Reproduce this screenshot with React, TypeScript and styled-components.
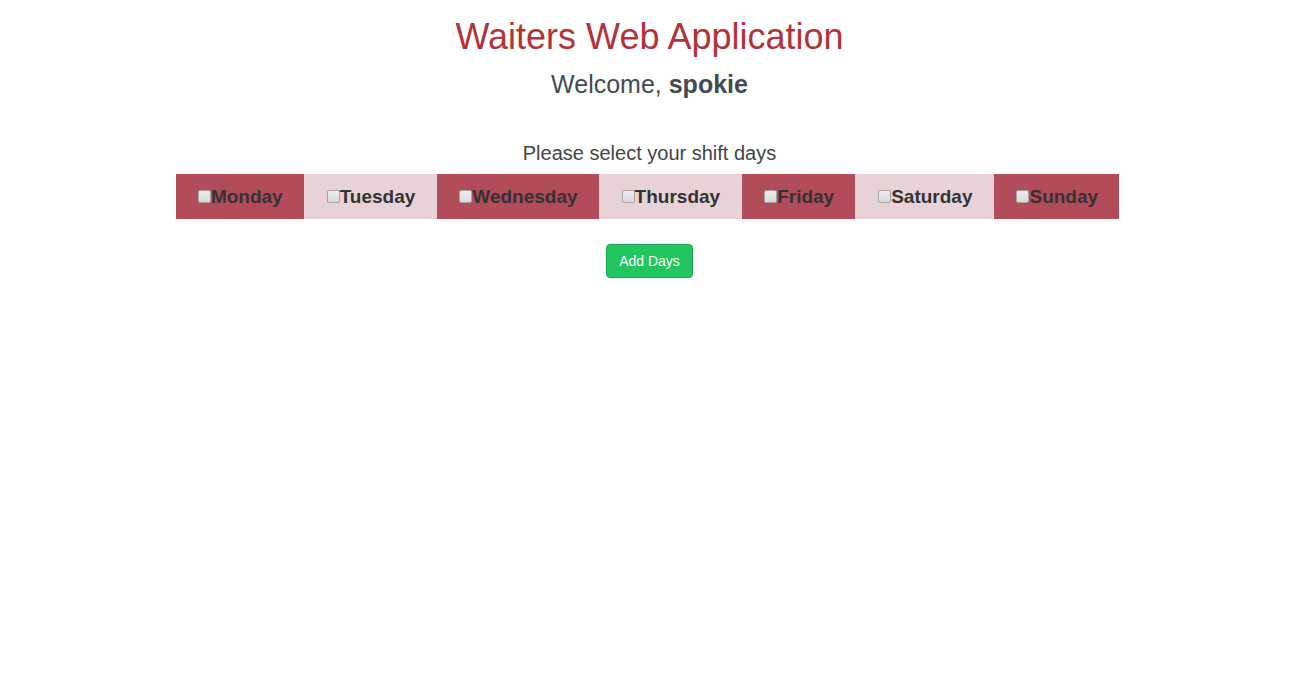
import React from "react";
import styled, { createGlobalStyle } from "styled-components";

const GlobalStyle = createGlobalStyle`
  body {
    margin: 0;
    background: #ffffff;
    font-family: "Liberation Sans", Arial, sans-serif;
    color: #333333;
  }
`;

const Page = styled.div`
  display: flex;
  flex-direction: column;
  align-items: center;
  padding-top: 17px;
`;

const Title = styled.h1`
  margin: 0;
  font-size: 36px;
  font-weight: 400;
  line-height: 40px;
  color: #b2323a;
`;

const Welcome = styled.h3`
  margin: 13px 0 0;
  font-size: 25px;
  font-weight: 400;
  line-height: 28px;
  color: #434a54;

  b {
    font-weight: 700;
  }
`;

const Prompt = styled.p`
  margin: 43px 0 0;
  font-size: 20px;
  line-height: 24px;
  color: #444444;
`;

const DaysTable = styled.div`
  display: flex;
  margin: 9px 4px 0 0;
`;

const DayCell = styled.label<{ $dark: boolean }>`
  display: flex;
  align-items: center;
  height: 45px;
  padding: ${(p) => (p.$dark ? "0 21px 0 22px" : "0 22px 0 23px")};
  background: ${(p) => (p.$dark ? "#b24b5a" : "#e7d3d7")};
  font-size: 19px;
  font-weight: 700;
  color: #333333;
  cursor: pointer;
`;

const Check = styled.input`
  appearance: none;
  width: 13px;
  height: 13px;
  margin: -1px 0 0 0;
  border: 1px solid #a5a5a5;
  border-radius: 2px;
  background: linear-gradient(#ececec, #d9d9d9);
  box-sizing: border-box;

  &:checked {
    background: #4a8fe2;
  }
`;

const AddButton = styled.button`
  margin-top: 25px;
  height: 34px;
  padding: 0 12px;
  border: 1px solid #1aa84c;
  border-radius: 4px;
  background: #22c55e;
  color: #ffffff;
  font-family: "Liberation Sans", Arial, sans-serif;
  font-size: 14px;
  cursor: pointer;
`;

const days = ["Monday", "Tuesday", "Wednesday", "Thursday", "Friday", "Saturday", "Sunday"];

export default function App() {
  return (
    <>
      <GlobalStyle />
      <Page>
        <Title>Waiters Web Application</Title>
        <Welcome>
          Welcome, <b>spokie</b>
        </Welcome>
        <Prompt>Please select your shift days</Prompt>
        <DaysTable>
          {days.map((day, i) => (
            <DayCell key={day} $dark={i % 2 === 0}>
              <Check type="checkbox" name="days" value={day} />
              {day}
            </DayCell>
          ))}
        </DaysTable>
        <AddButton type="submit">Add Days</AddButton>
      </Page>
    </>
  );
}
